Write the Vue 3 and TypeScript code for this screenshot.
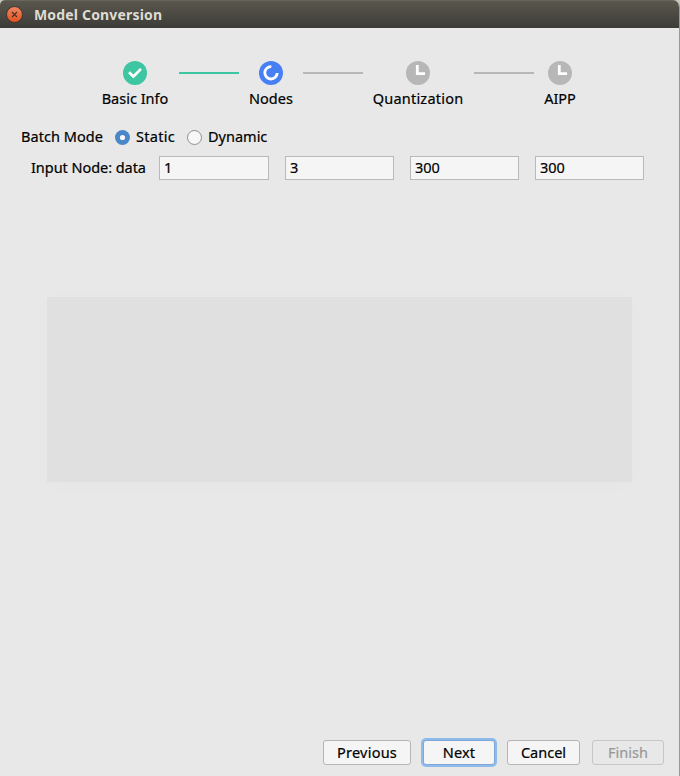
<script setup lang="ts">
import { ref } from 'vue'

type StepState = 'done' | 'active' | 'waiting'
interface Step {
  label: string
  state: StepState
  name: string
}

const steps: Step[] = [
  { label: 'Basic Info', state: 'done', name: 'basic' },
  { label: 'Nodes', state: 'active', name: 'nodes' },
  { label: 'Quantization', state: 'waiting', name: 'quant' },
  { label: 'AIPP', state: 'waiting', name: 'aipp' },
]

const mode = ref<'Static' | 'Dynamic'>('Static')
const modes = ['Static', 'Dynamic'] as const
const shape = ref<string[]>(['1', '3', '300', '300'])
</script>

<template>
  <div class="window">
    <header class="titlebar">
      <svg class="close" width="18" height="18" viewBox="0 0 18 18">
        <defs>
          <linearGradient id="closeFill" x1="0" y1="0" x2="0" y2="1">
            <stop offset="0" stop-color="#f08763" />
            <stop offset="1" stop-color="#e2511f" />
          </linearGradient>
        </defs>
        <circle cx="9.5" cy="8.5" r="8" fill="url(#closeFill)" stroke="#36342f" stroke-width="1" />
        <path d="M7 6 12 11M12 6 7 11" stroke="#4a3028" stroke-width="1.2" />
      </svg>
      <span class="title">Model Conversion</span>
    </header>

    <main class="content">
      <div class="steps">
        <template v-for="(step, i) in steps" :key="step.name">
          <span v-if="i > 0" class="line" :class="{ reached: steps[i - 1].state === 'done' }" />
          <div class="step" :class="step.name">
            <svg width="24" height="24" viewBox="0 0 24 24">
              <template v-if="step.state === 'done'">
                <circle cx="12" cy="12" r="12" fill="#3dc6a1" />
                <path d="M6 11.2 10.4 15.5 18 7.9" fill="none" stroke="#fff" stroke-width="2.7" />
              </template>
              <template v-else-if="step.state === 'active'">
                <circle cx="12" cy="12" r="12" fill="#477ff5" />
                <path d="M12.3 5.6A6.2 6.2 0 1 0 18.2 12" fill="none" stroke="#fff" stroke-width="2.8" />
              </template>
              <template v-else>
                <circle cx="12" cy="12" r="12" fill="#b7b7b7" />
                <path d="M11.3 4V12.6H19" fill="none" stroke="#fff" stroke-width="2.8" />
              </template>
            </svg>
            <span class="text">{{ step.label }}</span>
          </div>
        </template>
      </div>

      <div class="mode-row">
        <span class="text batch">Batch Mode</span>
        <label v-for="m in modes" :key="m" class="radio" :class="m.toLowerCase()" @click="mode = m">
          <svg width="15" height="15" viewBox="0 0 15 15">
            <template v-if="mode === m">
              <circle cx="7.5" cy="7.5" r="7.5" fill="#4a87c8" />
              <circle cx="7.5" cy="7.5" r="2.6" fill="#f7f7f7" />
            </template>
            <circle v-else cx="7.5" cy="7.5" r="7" fill="#f7f7f7" stroke="#8d8d8d" />
          </svg>
          <span class="text">{{ m }}</span>
        </label>
      </div>

      <div class="node-row">
        <span class="text node-label">Input Node: data</span>
        <div class="fields">
          <input v-for="(_, i) in shape" :key="i" v-model="shape[i]" type="text" />
        </div>
      </div>

      <div class="panel" />

      <footer class="actions">
        <button class="previous"><span class="text">Previous</span></button>
        <button class="next"><span class="text">Next</span></button>
        <button class="cancel"><span class="text">Cancel</span></button>
        <button class="finish" disabled><span class="text">Finish</span></button>
      </footer>
    </main>
  </div>
</template>

<style>
body {
  background: #c9c9bd;
}
</style>

<style scoped>
.window {
  box-sizing: border-box;
  width: 680px;
  height: 776px;
  display: flex;
  flex-direction: column;
  overflow: hidden;
  border-radius: 5px 7px 0 0;
  border-right: 1px solid #989898;
  background: #e8e8e8;
  color: #000;
  font: 14.5px/20px "Noto Sans", "Open Sans", sans-serif;
  -webkit-text-stroke: 0.2px currentColor;
}
.titlebar {
  flex: none;
  height: 28px;
  display: flex;
  align-items: center;
  box-sizing: border-box;
  padding: 0 0 0 5px;
  background: linear-gradient(#5a574d, #3c3b37);
  border-top: 1px solid #67645a;
}
.title {
  margin-left: 11px;
  color: #dfdbd2;
  font-weight: 700;
  font-size: 14px;
  letter-spacing: 0.17px;
  white-space: nowrap;
  -webkit-text-stroke: 0;
}
.content {
  flex: 1;
  display: flex;
  flex-direction: column;
}
.text {
  white-space: nowrap;
}
.steps {
  display: flex;
  gap: 10px;
  padding: 33px 0 0 102px;
}
.step {
  display: flex;
  flex-direction: column;
  align-items: center;
  gap: 3px;
}
.step svg {
  display: block;
}
.basic {
  width: 66px;
  margin-right: 1px;
}
.nodes { width: 44px; }
.quant {
  width: 90px;
  margin-right: 1px;
  letter-spacing: 0.22px;
}
.aipp { width: 32px; }
.line {
  flex: none;
  width: 60px;
  height: 2px;
  margin-top: 11px;
  background: #b7b7b7;
}
.line.reached {
  background: #3dc6a1;
}
.mode-row {
  display: flex;
  align-items: center;
  height: 20px;
  margin: 18px 0 0 21px;
}
.batch {
  width: 94px;
  letter-spacing: 0.05px;
}
.radio {
  display: flex;
  align-items: center;
  gap: 6px;
}
.radio svg {
  position: relative;
  top: 1px;
}
.static {
  width: 72px;
  letter-spacing: 0.3px;
}
.node-row {
  display: flex;
  align-items: center;
  height: 24px;
  margin: 10px 0 0 31px;
}
.node-label {
  width: 128px;
  margin-top: -2px;
  letter-spacing: -0.05px;
}
.fields {
  display: flex;
  gap: 16px;
}
input {
  box-sizing: border-box;
  width: 109px;
  height: 24px;
  padding: 0 4px 2px;
  border: 1px solid #b9b9b9;
  border-radius: 0;
  background: #f5f5f5;
  color: inherit;
  font: inherit;
  outline: none;
}
input:first-child {
  width: 110px;
}
.panel {
  width: 585px;
  height: 185px;
  margin: 117px 0 0 47px;
  background: #e0e0e0;
  box-shadow: 0 2px 20px rgba(0, 0, 0, 0.014);
}
.actions {
  display: flex;
  justify-content: flex-end;
  margin: auto 15px 11px 0;
}
button {
  box-sizing: border-box;
  height: 25px;
  display: flex;
  align-items: center;
  justify-content: center;
  padding: 0 0 2px;
  border: 1px solid #b5b5b5;
  border-radius: 3px;
  background: #f5f5f5;
  color: inherit;
  font: inherit;
}
.previous {
  width: 88px;
  letter-spacing: 0.25px;
}
.next {
  width: 72px;
  margin: 0 12px;
  border-color: #7ea8d8;
  box-shadow: 0 0 0 2px #8fbbea;
  letter-spacing: 0.2px;
}
.cancel { width: 73px; }
.finish {
  width: 72px;
  margin-left: 12px;
  border-color: #c6c6c6;
  background: #e8e8e8;
  color: #999;
}
</style>
